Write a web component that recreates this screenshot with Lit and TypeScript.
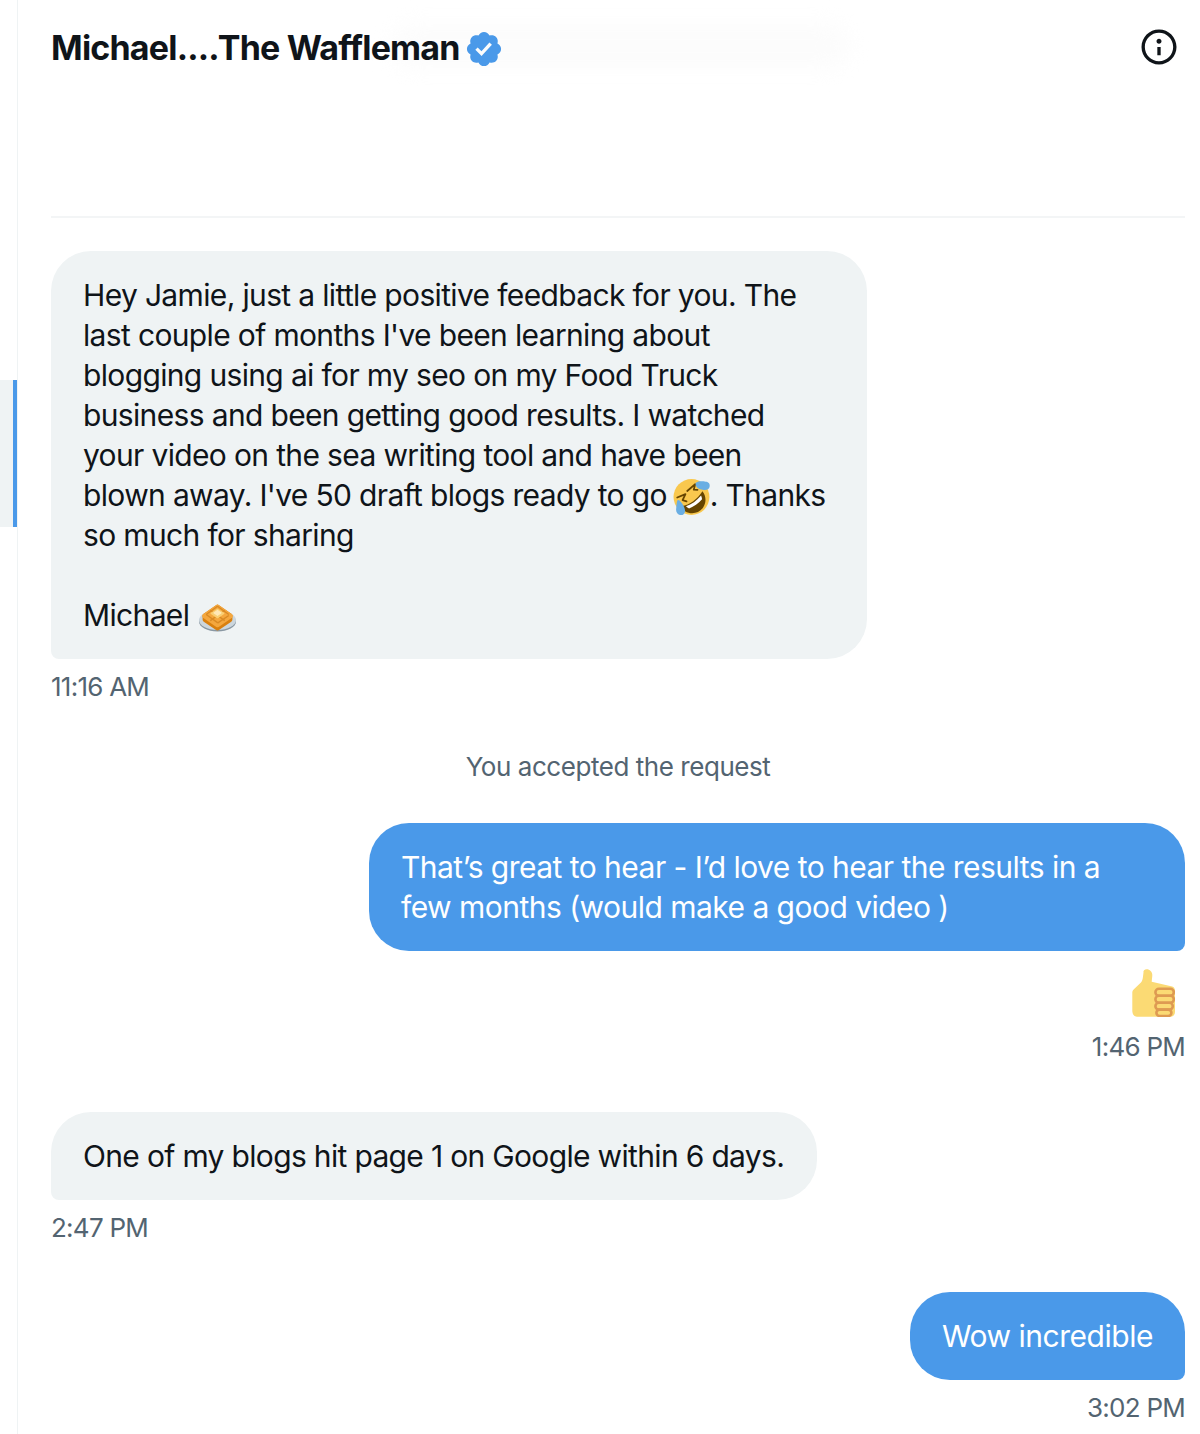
import { LitElement, html, css } from "lit";
import { customElement } from "lit/decorators.js";

const rofl = html`<svg class="emoji rofl" viewBox="0 0 36 36">
  <circle cx="17.5" cy="18" r="17" fill="#F9C84E"/>
  <path d="M8.2 26.6c7.6-1.2 15.1-6.600 19.700-14.100 3.600 4.300 3.900 10.800.5 15.600-3.900 5.500-11.300 6.800-17 3.300-1.400-.9-2.500-2.400-3.200-4.800z" fill="#664500"/>
  <path d="M12.300 26.800c5.300-1.700 10.300-5.300 14.300-10.200.6 1.200.8 2.400.9 3.500-3.500 3.900-7.700 6.900-12.300 8.800-1.100-.5-2.100-1.200-2.900-2.100z" fill="#fff"/>
  <path d="M15.500 13.300 23 6.800l-1.300 5.200 3.500.2" fill="none" stroke="#664500" stroke-width="1.700" stroke-linejoin="round" stroke-linecap="round" transform="translate(-2 -1)"/>
  <path d="M4 18.500l7.800-3.200-2.700 5.600 3.700 1.300" fill="none" stroke="#664500" stroke-width="1.700" stroke-linejoin="round" stroke-linecap="round"/>
  <path d="M21.500 4.800c1.400-1.600 5.500-1.800 8.500-1.500 3 .2 5 1.400 4.800 4.200-.2 2.600-2.300 4.300-5.500 3.900-3.300-.4-5.800-.9-7.200-3.300-.5-1-.9-2.300-.6-3.300z" fill="#6AAEE3"/>
  <path d="M4.500 20.800c1-.3 2.500.8 4 3.100 1.500 2.400 3.200 5.500 2.900 7.800-.4 2.600-2.500 3.900-4.900 3.300-2.600-.6-3.900-3-3.500-5.800.3-2.600.5-7.800 1.500-8.400z" fill="#6AAEE3"/>
</svg>`;

const waffle = html`<svg class="emoji waffle" viewBox="0 0 36 28">
  <ellipse cx="18" cy="18" rx="18" ry="9.500" fill="#8A98A3"/>
  <ellipse cx="18" cy="16.500" rx="18" ry="9.500" fill="#CCD6DD"/>
  <path d="M18 4 30 12.500 30 16 18 24 6 16 6 12.500z" fill="#D9800F" stroke="#D9800F" stroke-width="5" stroke-linejoin="round"/>
  <path d="M18 3.500 31 12.500 18 21.500 5 12.500z" fill="#F4A73E" stroke="#F4A73E" stroke-width="4" stroke-linejoin="round"/>
  <path d="M11 7l14 10M18 3l11 8M7 11l11 8M25 7 11 17M18 3 7 11M29 12l-11 7.500" stroke="#D98A24" stroke-width="1.300" fill="none"/>
  <path d="M18 6 24 10 18 14 12 10z" fill="#F9CF74" stroke="#F9CF74" stroke-width="1.500" stroke-linejoin="round"/>
  <path d="M18 7 21.500 9.500 18 12 14.500 9.500z" fill="#FFE8B6" stroke="#FFE8B6" stroke-linejoin="round"/>
</svg>`;

const thumb = html`<svg class="thumb" viewBox="0 0 43 48">
  <path fill="#FBDA74" d="M14.700.3c3 0 5.600 2.700 5.600 5.500 0 2.400-.4 4.900-.6 6.900l20.500 4.800c1.700.6 2.800 2.200 2.800 4v21.500c0 2.600-1.600 4.700-4 4.700H5.500C2.400 48 .3 45.500.3 41.500V23.800c0-1.400.6-2.600 1.600-3.500l6.800-6.500c1.300-1.300 1.800-3 2.100-4.800l.7-5.400C11 1.700 12.500.3 14.700.3z"/>
  <g fill="none" stroke="#DE9A52" stroke-width="2.600">
    <rect x="23.400" y="19.800" width="18.400" height="7" rx="3.500"/>
    <rect x="23.400" y="26.800" width="18.400" height="7" rx="3.500"/>
    <rect x="23.400" y="33.800" width="17.400" height="6.800" rx="3.400"/>
    <rect x="24.400" y="40.600" width="15" height="6.400" rx="3.200"/>
  </g>
</svg>`;

@customElement("app-root")
export class AppRoot extends LitElement {
  static styles = css`
    :host {
      display: block;
      position: relative;
      width: 1200px;
      height: 1434px;
      overflow: hidden;
      background: #fff;
      font-family: Inter, "Liberation Sans", sans-serif;
      color: #0f1419;
    }
    .page { display: flex; height: 1434px; position: relative; z-index: 1; }
    .rail { width: 17px; border-right: 1px solid #eff3f4; flex: none; padding-top: 380px; box-sizing: content-box; }
    .rail-active { height: 147px; background: #eff3f4; border-right: 4px solid #4a99e9; box-sizing: border-box; }
    .main { width: 1134px; margin-left: 33px; flex: none; display: flex; flex-direction: column; }
    .head { height: 216px; border-bottom: 2px solid #f3f5f6; box-sizing: content-box; flex: none; }
    .title-row { display: flex; align-items: center; justify-content: space-between; height: 96px; }
    .title { display: flex; align-items: center; gap: 4px; }
    .name { font-size: 34px; font-weight: 700; letter-spacing: -0.8px; line-height: 40px; }
    .badge { width: 40px; height: 40px; fill: #4a99e9; display: block; margin-top: 2px; }
    .info { width: 40px; height: 40px; fill: #0f1419; display: block; margin-right: 6px; margin-top: -2px; }
    .haze {
      position: absolute; left: 390px; top: 24px; width: 460px; height: 44px;
      background: #fcfcfc; filter: blur(10px); border-radius: 22px; pointer-events: none;
    }
    .bubble {
      padding: 24px 32px; font-size: 30px; line-height: 40px; letter-spacing: -0.65px;
      border-radius: 40px; box-sizing: border-box; white-space: pre-line;
    }
    .in { background: #eff3f4; border-bottom-left-radius: 8px; align-self: flex-start; }
    .out { background: #4a99e9; color: #fff; border-bottom-right-radius: 8px; align-self: flex-end; letter-spacing: -0.53px; }
    .first { margin-top: 33px; width: 816px; }
    .sent { margin-top: 40px; width: 816px; }
    .short-in { margin-top: 49px; width: 766px; white-space: nowrap; letter-spacing: -0.67px; }
    .short-out { margin-top: 48px; width: 275px; white-space: nowrap; letter-spacing: -0.48px; }
    .time, .note { font-size: 26px; line-height: 32px; color: #536471; letter-spacing: -0.75px; }
    .time { margin-top: 12px; }
    .time.right { text-align: right; }
    .note { text-align: center; margin-top: 48px; letter-spacing: -0.45px; }
    .tapback { display: flex; justify-content: flex-end; margin-top: 18px; height: 50px; padding-right: 10px; }
    .thumb { width: 43px; height: 48px; display: block; }
    .emoji { display: inline-block; vertical-align: middle; }
    .rofl { width: 38px; height: 38px; margin: -8px -1px -6px -2px; }
    .waffle { width: 37px; height: 29px; margin: 0 0 -6px 2px; vertical-align: baseline; }
    .after-thumb { margin-top: 12px; }
  `;

  render() {
    return html`<div class="haze"></div>
    <div class="page">
      <div class="rail"><div class="rail-active"></div></div>
      <div class="main">
        <header class="head">
          <div class="title-row">
            <div class="title">
              <span class="name">Michael....The Waffleman</span>
              <svg class="badge" viewBox="0 0 24 24"><path d="M22.25 12c0-1.43-.88-2.67-2.19-3.34.46-1.39.2-2.9-.81-3.91s-2.52-1.27-3.91-.81c-.66-1.31-1.91-2.19-3.34-2.19s-2.67.88-3.33 2.19c-1.4-.46-2.91-.2-3.92.81s-1.26 2.52-.8 3.91c-1.31.67-2.2 1.91-2.2 3.34s.89 2.67 2.2 3.34c-.46 1.39-.21 2.9.8 3.91s2.52 1.26 3.91.81c.67 1.31 1.91 2.19 3.34 2.19s2.68-.88 3.34-2.19c1.39.45 2.9.2 3.91-.81s1.27-2.52.81-3.91c1.31-.67 2.19-1.91 2.19-3.34zm-11.71 4.2L6.8 12.46l1.41-1.42 2.26 2.26 4.8-5.23 1.47 1.36-6.2 6.77z"/></svg>
            </div>
            <svg class="info" viewBox="0 0 24 24"><path d="M13.5 8.5c0 .83-.67 1.5-1.5 1.5s-1.5-.67-1.5-1.5S11.17 7 12 7s1.5.67 1.5 1.5zM13 17v-5h-2v5h2zm-1 5.5C6.2 22.5 1.5 17.8 1.5 12S6.2 1.5 12 1.5 22.5 6.2 22.5 12 17.8 22.500 12 22.500zM12 3.500c-4.700 0-8.500 3.800-8.500 8.500s3.800 8.500 8.500 8.500 8.500-3.800 8.500-8.500-3.800-8.500-8.500-8.500z"/></svg>
          </div>
        </header>
        <div class="bubble in first">Hey Jamie, just a little positive feedback for you. The
last couple of months I've been learning about
blogging using ai for my seo on my Food Truck
business and been getting good results. I watched
your video on the sea writing tool and have been
blown away. I've 50 draft blogs ready to go ${rofl}. Thanks
so much for sharing

Michael ${waffle}</div>
        <div class="time">11:16 AM</div>
        <div class="note">You accepted the request</div>
        <div class="bubble out sent">That’s great to hear - I’d love to hear the results in a
few months (would make a good video )</div>
        <div class="tapback">${thumb}</div>
        <div class="time right after-thumb">1:46 PM</div>
        <div class="bubble in short-in">One of my blogs hit page 1 on Google within 6 days.</div>
        <div class="time">2:47 PM</div>
        <div class="bubble out short-out">Wow incredible</div>
        <div class="time right">3:02 PM</div>
      </div>
    </div>`;
  }
}
